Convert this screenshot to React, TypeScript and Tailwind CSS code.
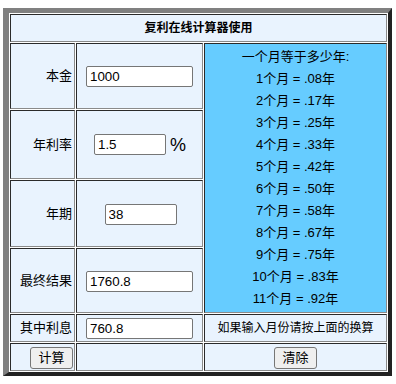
import React from 'react';

const font = { fontFamily: '"Liberation Sans", Arial, "Noto Sans CJK SC", sans-serif' };

const cell =
  'bg-[#e9f3fe] border border-t-[#2a2a2a] border-l-[#2a2a2a] border-r-[#8a8a8a] border-b-[#8a8a8a] p-0';

function Field({ value, w }: { value: string; w: string }) {
  return (
    <input
      type="text"
      defaultValue={value}
      className={`${w} h-[21px] bg-white border border-[#767676] rounded-[2px] px-[3px] text-[13.33px] text-black outline-none`}
      style={font}
    />
  );
}

function Btn({ label }: { label: string }) {
  return (
    <button
      className="h-[22px] w-[43px] bg-[#efefef] border border-[#767676] rounded-[3px] text-[13px] text-black leading-none"
      style={font}
    >
      {label}
    </button>
  );
}

const months = ['.08', '.17', '.25', '.33', '.42', '.50', '.58', '.67', '.75', '.83', '.92'];

export default function App() {
  return (
    <div className="bg-white w-[396px] h-[384px] pt-[8px] pl-[3px]" style={font}>
      <table className="table-fixed w-[389px] border-separate border-spacing-[1px] bg-white border-solid border-t-[5px] border-l-[6px] border-r-[4px] border-b-[4px] border-t-[#808080] border-l-[#808080] border-r-[#222222] border-b-[#222222] text-black">
        <colgroup>
          <col className="w-[65px]" />
          <col className="w-[127px]" />
          <col className="w-[183px]" />
        </colgroup>
        <tbody>
          <tr className="h-[28px]">
            <td colSpan={3} className={`${cell} text-center text-[12px] font-bold`}>
              复利在线计算器使用
            </td>
          </tr>
          <tr className="h-[66px]">
            <td className={`${cell} text-right text-[13px] pr-[2px]`}>本金</td>
            <td className={`${cell} text-center`}>
              <Field value="1000" w="w-[107px]" />
            </td>
            <td rowSpan={4} className={`${cell} !bg-[#66ccff] text-center text-[13px] leading-[22px]`}>
              <div>一个月等于多少年:</div>
              {months.map((m, i) => (
                <div key={m}>
                  {i + 1}个月 = {m}年
                </div>
              ))}
            </td>
          </tr>
          <tr className="h-[69px]">
            <td className={`${cell} text-right text-[13px] pr-[2px]`}>年利率</td>
            <td className={`${cell} text-center`}>
              <div className="flex items-center justify-center gap-[4px] pl-[1px]">
                <Field value="1.5" w="w-[72px]" />
                <span className="text-[18px] leading-none">%</span>
              </div>
            </td>
          </tr>
          <tr className="h-[67px]">
            <td className={`${cell} text-right text-[13px] pr-[2px]`}>年期</td>
            <td className={`${cell} text-center pl-[2px]`}>
              <Field value="38" w="w-[72px]" />
            </td>
          </tr>
          <tr className="h-[65px]">
            <td className={`${cell} text-right text-[13px] pr-[2px]`}>最终结果</td>
            <td className={`${cell} text-center`}>
              <Field value="1760.8" w="w-[107px]" />
            </td>
          </tr>
          <tr className="h-[28px]">
            <td className={`${cell} text-right text-[13px] pr-[2px]`}>其中利息</td>
            <td className={`${cell} text-center`}>
              <Field value="760.8" w="w-[107px]" />
            </td>
            <td className={`${cell} text-center text-[12px]`}>如果输入月份请按上面的换算</td>
          </tr>
          <tr className="h-[28px]">
            <td className={`${cell} text-right pr-[1px]`}>
              <Btn label="计算" />
            </td>
            <td className={cell}></td>
            <td className={`${cell} text-center`}>
              <Btn label="清除" />
            </td>
          </tr>
        </tbody>
      </table>
    </div>
  );
}
